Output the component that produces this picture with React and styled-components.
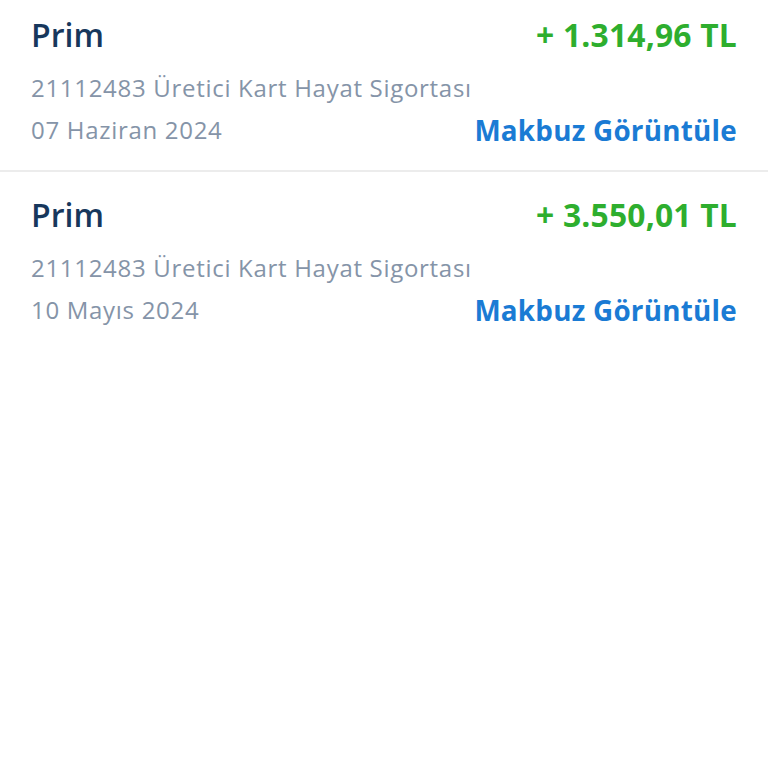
import React from "react";
import styled, { createGlobalStyle } from "styled-components";

const Global = createGlobalStyle`
  html, body { margin: 0; padding: 0; background: #ffffff; }
  body { font-family: "Open Sans", "Noto Sans", sans-serif; -webkit-font-smoothing: antialiased; }
`;

const List = styled.div`
  display: flex;
  flex-direction: column;
  width: 768px;
`;

const Item = styled.div`
  display: grid;
  grid-template-columns: 1fr auto;
  padding: 21px 31px 19px 31px;
  border-bottom: 2px solid #ececec;
  &:first-child { padding-top: 13px; }
  &:last-child { border-bottom: none; }
`;

const Title = styled.div`
  font-size: 32px;
  font-weight: 600;
  letter-spacing: 0px;
  color: #17375c;
  line-height: 44px;
`;

const Amount = styled.div`
  font-size: 31.8px;
  font-weight: 700;
  letter-spacing: 0.2px;
  color: #2eae2e;
  line-height: 44px;
  text-align: right;
`;

const Sub = styled.div`
  grid-column: 1 / -1;
  margin-top: 10px;
  font-size: 24px;
  font-weight: 500;
  letter-spacing: 0.7px;
  color: #8594a8;
  line-height: 42px;
`;

const DateText = styled.div`
  font-size: 24px;
  font-weight: 500;
  letter-spacing: 0.7px;
  color: #8594a8;
  line-height: 42px;
`;

const Link = styled.a`
  font-size: 27.8px;
  font-weight: 700;
  letter-spacing: 0.25px;
  color: #1a7bd4;
  line-height: 42px;
  text-align: right;
  text-decoration: none;
  cursor: pointer;
`;

const rows = [
  { amount: "+ 1.314,96 TL", date: "07 Haziran 2024" },
  { amount: "+ 3.550,01 TL", date: "10 Mayıs 2024" },
];

export default function App() {
  return (
    <>
      <Global />
      <List>
        {rows.map((r, i) => (
          <Item key={i}>
            <Title>Prim</Title>
            <Amount>{r.amount}</Amount>
            <Sub>21112483 Üretici Kart Hayat Sigortası</Sub>
            <DateText>{r.date}</DateText>
            <Link>Makbuz Görüntüle</Link>
          </Item>
        ))}
      </List>
    </>
  );
}
